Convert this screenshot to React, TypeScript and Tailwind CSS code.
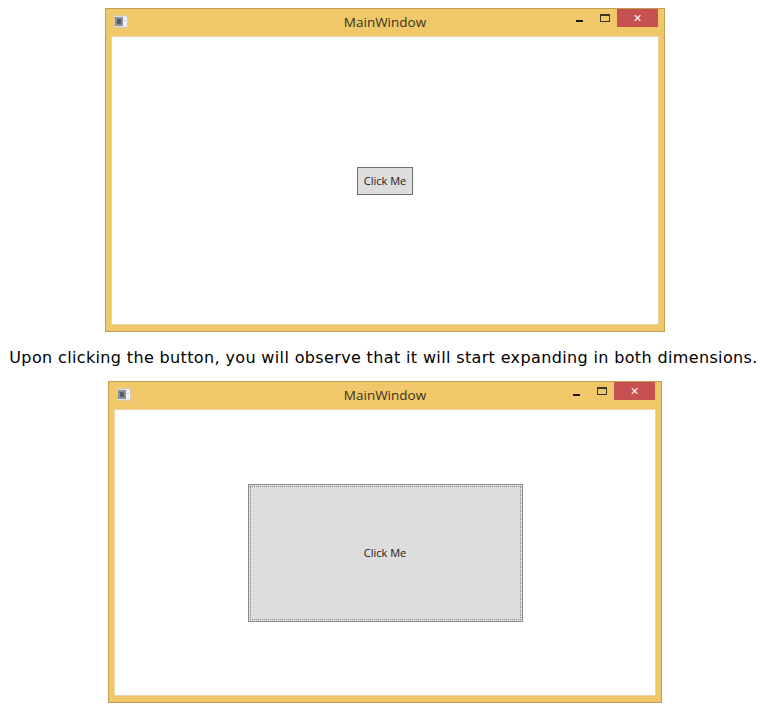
const AppIcon = () => (
  <svg width="14" height="13" viewBox="0 0 14 13" className="block">
    <rect x="0.5" y="0.5" width="13" height="12" fill="#dfe2e4" stroke="#c4bfa8" strokeDasharray="1 1" />
    <rect x="1" y="2" width="8" height="9" fill="#8b9098" />
    <rect x="3" y="4" width="4" height="5" fill="#565c64" />
    <rect x="9" y="2" width="4" height="9" fill="#eef2f6" />
    <rect x="10" y="5" width="2" height="1" fill="#b8c4d0" />
  </svg>
)

const TitleBar = ({ minOffset }: { minOffset: string }) => (
  <div className="grid h-[27px] grid-cols-3">
    <div className="flex items-start pl-[8px] pt-[6px]">
      <AppIcon />
    </div>
    <div className="flex items-center justify-center font-['Open_Sans',sans-serif] text-[13.5px] text-[#3a3320]">
      MainWindow
    </div>
    <div className="flex items-start justify-end pr-[6px]">
      <div className={`h-[2px] w-[7px] bg-[#1c1a14] ${minOffset}`}></div>
      <div className="ml-[17px] mt-[5px] h-[8px] w-[10px] border border-t-2 border-[#3a3630]"></div>
      <div className="ml-[7px] flex h-[18px] w-[41px] items-center justify-center bg-[#c75050] text-[14px] leading-none text-white font-['Liberation_Sans',sans-serif]">
        ×
      </div>
    </div>
  </div>
)

const App = () => {
  return (
    <div className="flex h-[708px] w-[767px] flex-col items-center bg-white pl-[3px] pt-[8px]">
      <div className="flex h-[324px] w-[560px] flex-col border border-[#bf9f55] bg-[#f0c869]">
        <TitleBar minOffset="mt-[11px]" />
        <div className="mb-[6px] ml-[5px] mr-[5px] flex flex-1 items-center justify-center border border-[#e6d6a8] bg-white">
          <button className="h-[28px] w-[56px] border border-[#707070] bg-[#dddddd] pt-[1px] font-['Open_Sans',sans-serif] text-[11px] text-[#1a1a1a]">
            Click Me
          </button>
        </div>
      </div>

      <p className="mr-[3px] mt-[14px] whitespace-nowrap font-['DejaVu_Sans',sans-serif] text-[16px] leading-[24px] tracking-[0.36px] text-black">
        Upon clicking the button, you will observe that it will start expanding in both dimensions.
      </p>

      <div className="mt-[11px] flex h-[322px] w-[554px] flex-col border border-[#bf9f55] bg-[#f0c869]">
        <TitleBar minOffset="mt-[12px]" />
        <div className="mb-[6px] ml-[5px] mr-[5px] flex flex-1 items-center justify-center border border-[#e6d6a8] bg-white">
          <button className="mt-[1px] flex h-[138px] w-[275px] items-center justify-center border border-[#8a8a8a] bg-[#dddddd] p-[1px] font-['Open_Sans',sans-serif] text-[11px] text-[#1a1a1a]">
            <span className="flex h-full w-full items-center justify-center border border-dotted border-[#8a8a8a]">
              Click Me
            </span>
          </button>
        </div>
      </div>
    </div>
  )
}

export default App
